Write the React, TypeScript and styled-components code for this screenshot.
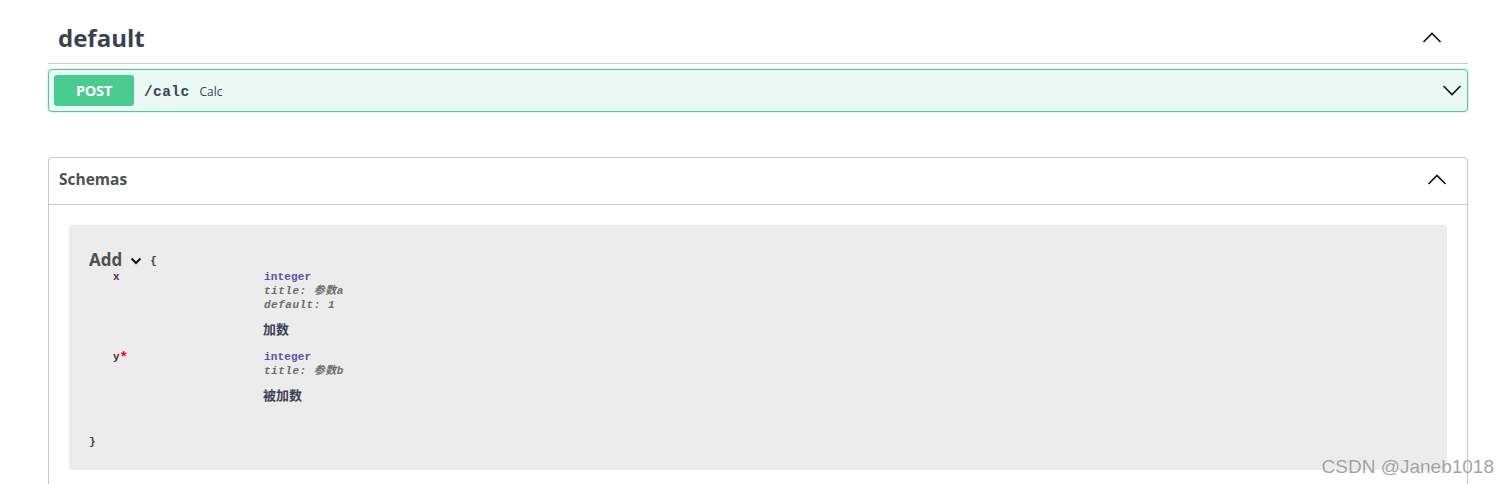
import styled, { createGlobalStyle } from "styled-components";

const GlobalStyle = createGlobalStyle`
    html, body {
        margin: 0;
        padding: 0;
        height: 484px;
        overflow: hidden;
        background: #fff;
    }
    * { box-sizing: border-box; }
`;

const mono = `"Liberation Mono", "Noto Sans CJK SC", monospace`;
const sans = `"Open Sans", "Noto Sans CJK SC", sans-serif`;

const Page = styled.div`
    position: relative;
    width: 1509px;
    height: 484px;
    padding: 0 41px 0 48px;
    overflow: hidden;
    font-family: ${sans};
`;

const TagHeader = styled.div`
    display: flex;
    align-items: center;
    justify-content: space-between;
    height: 64px;
    padding: 12px 26px 0 10px;
    border-bottom: 1px solid #c8c8c8;
`;

const TagTitle = styled.h3`
    margin: 0;
    font-size: 24px;
    line-height: 36px;
    font-weight: 700;
    color: #3b4151;
`;

const OpBlock = styled.div`
    display: flex;
    align-items: center;
    height: 43px;
    margin-top: 5px;
    padding: 0 5px;
    background: #eaf9f3;
    border: 1px solid #49cc90;
    border-radius: 4px;
    box-shadow: 0 0 3px rgba(0, 0, 0, 0.19);
`;

const Method = styled.span`
    display: flex;
    align-items: center;
    justify-content: center;
    width: 80px;
    height: 31px;
    background: #49cc90;
    border-radius: 3px;
    color: #fff;
    font-size: 14.5px;
    font-weight: 700;
    letter-spacing: -0.2px;
`;

const OpPath = styled.span`
    margin: 2px 0 0 10px;
    font-family: ${mono};
    font-size: 14.5px;
    font-weight: 700;
    letter-spacing: 0.4px;
    color: #3b4151;
`;

const OpSummary = styled.span`
    flex: 1;
    margin: 1px 0 0 10px;
    font-size: 12px;
    color: #3b4151;
`;

const Chevron = styled.svg`
    display: block;
    flex: none;
    fill: none;
    stroke: #111;
    stroke-width: 1.6;
`;

const SmallChevron = styled(Chevron)`
    margin: 3px 0 0 8px;
    stroke-width: 2;
`;

const SchemasBox = styled.section`
    margin-top: 45px;
    height: 340px;
    border: 1px solid #c8c8c8;
    border-bottom: none;
    border-radius: 4px 4px 0 0;
`;

const SchemasHeader = styled.div`
    display: flex;
    align-items: center;
    justify-content: space-between;
    height: 47px;
    padding: 0 20px 4px 10px;
    border-bottom: 1px solid #c8c8c8;
`;

const SchemasTitle = styled.h4`
    margin: 0;
    font-size: 15.5px;
    font-weight: 700;
    color: #505050;
`;

const ModelBox = styled.div`
    height: 245px;
    margin: 20px 20px 0;
    padding: 23px 20px 0;
    background: #ececec;
    border-radius: 4px;
    font-family: ${mono};
    font-size: 12px;
    font-weight: 600;
    color: #3b4151;
`;

const ModelHead = styled.div`
    display: flex;
    align-items: center;
    height: 22px;
`;

const ModelName = styled.span`
    font-family: ${sans};
    font-size: 17px;
    font-weight: 700;
    color: #505050;
`;

const Brace = styled.span`
    font-size: 11px;
    margin: 3px 0 0 8px;
`;

const PropRow = styled.div`
    display: grid;
    grid-template-columns: 151px 1fr;
    padding-left: 24px;
    margin-bottom: 13px;
`;

const PropName = styled.div`
    font-size: 11px;
    line-height: 14px;
    font-weight: 700;
    color: #4a2f3f;
`;

const Required = styled.span`
    font-size: 14px;
    line-height: 12px;
    vertical-align: -2px;
    color: #f00;
`;

const TypeName = styled.div`
    font-size: 11px;
    line-height: 14px;
    font-weight: 700;
    letter-spacing: 0.15px;
    color: #5a4db0;
`;

const TypeMeta = styled.div`
    font-size: 11px;
    line-height: 14px;
    font-style: italic;
    font-weight: 700;
    letter-spacing: 0.5px;
    color: #6b6b6b;
`;

const PropDesc = styled.p`
    margin: 9px 0 0 -1px;
    font-family: ${sans};
    font-size: 13px;
    line-height: 16px;
    font-weight: 700;
    color: #3b4151;
`;

const CloseBrace = styled.div`
    margin-top: 32px;
    font-size: 11px;
    line-height: 14px;
    font-weight: 700;
`;

const Watermark = styled.span`
    position: absolute;
    right: 15px;
    bottom: 6px;
    font-family: "Liberation Sans", sans-serif;
    font-size: 19px;
    color: rgba(120, 120, 120, 0.7);
    text-shadow: 0 0 1px rgba(255, 255, 255, 0.8);
`;

const Up = () => (
    <Chevron width="20" height="11" viewBox="0 0 20 11">
        <path d="M1.5 10 L10 1.5 L18.5 10" />
    </Chevron>
);

const App = () => (
    <>
        <GlobalStyle />
        <Page>
            <TagHeader>
                <TagTitle>default</TagTitle>
                <Up />
            </TagHeader>
            <OpBlock>
                <Method>POST</Method>
                <OpPath>/calc</OpPath>
                <OpSummary>Calc</OpSummary>
                <Chevron width="20" height="11" viewBox="0 0 20 11">
                    <path d="M1.5 1 L10 9.5 L18.5 1" />
                </Chevron>
            </OpBlock>
            <SchemasBox>
                <SchemasHeader>
                    <SchemasTitle>Schemas</SchemasTitle>
                    <Up />
                </SchemasHeader>
                <ModelBox>
                    <ModelHead>
                        <ModelName>Add</ModelName>
                        <SmallChevron width="12" height="8" viewBox="0 0 12 8">
                            <path d="M1.5 1.5 L6 6 L10.5 1.5" />
                        </SmallChevron>
                        <Brace>{"{"}</Brace>
                    </ModelHead>
                    <PropRow>
                        <PropName>x</PropName>
                        <div>
                            <TypeName>integer</TypeName>
                            <TypeMeta>title: 参数a</TypeMeta>
                            <TypeMeta>default: 1</TypeMeta>
                            <PropDesc>加数</PropDesc>
                        </div>
                    </PropRow>
                    <PropRow>
                        <PropName>y<Required>*</Required></PropName>
                        <div>
                            <TypeName>integer</TypeName>
                            <TypeMeta>title: 参数b</TypeMeta>
                            <PropDesc>被加数</PropDesc>
                        </div>
                    </PropRow>
                    <CloseBrace>{"}"}</CloseBrace>
                </ModelBox>
            </SchemasBox>
            <Watermark>CSDN @Janeb1018</Watermark>
        </Page>
    </>
);

export default App;
